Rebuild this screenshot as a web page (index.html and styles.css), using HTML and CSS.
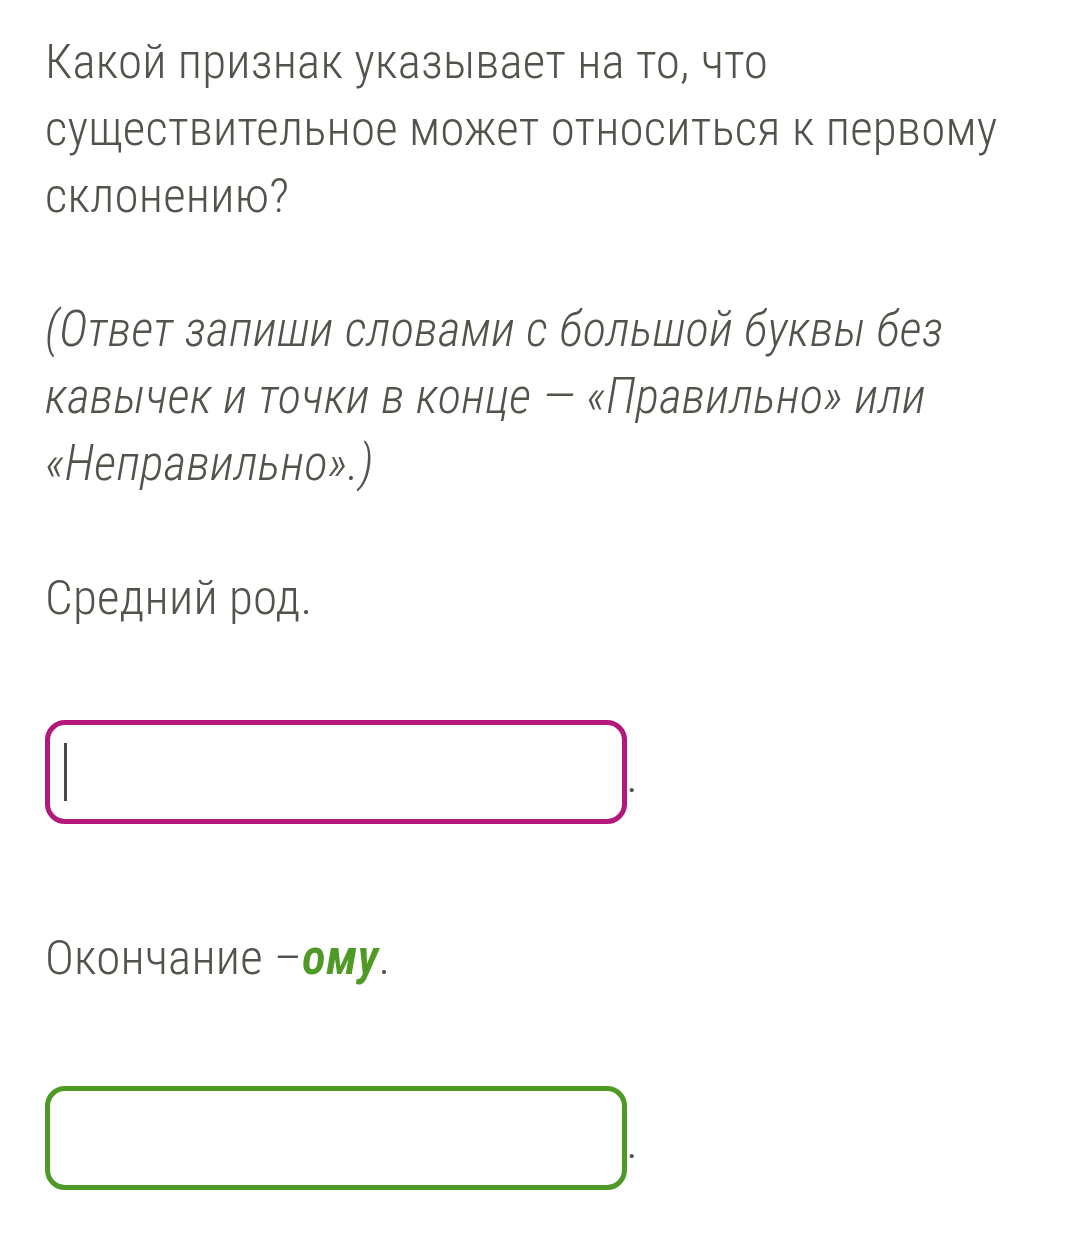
FILE: index.html
```html
<!DOCTYPE html>
<html lang="ru">
<head>
<meta charset="utf-8">
<link rel="stylesheet" href="styles.css">
</head>
<body>
<main class="page">
  <p class="question">Какой признак указывает на то, что существительное может относиться к первому склонению?</p>
  <p class="hint">(Ответ запиши словами с большой буквы без кавычек и точки в конце — «Правильно» или «Неправильно».)</p>
  <p class="statement">Средний род.</p>
  <div class="answer-row answer-row--first">
    <div class="answer-box answer-box--active"><span class="caret"></span></div><span class="dot">.</span>
  </div>
  <p class="statement statement--second">Окончание –<em class="ending">ому</em>.</p>
  <div class="answer-row answer-row--second">
    <div class="answer-box answer-box--correct"></div><span class="dot">.</span>
  </div>
</main>
</body>
</html>
```

FILE: styles.css
```css
html, body {
  margin: 0;
  padding: 0;
  background: #ffffff;
}
.page {
  padding: 28px 0 0 45px;
  font-family: "Roboto Condensed", "Roboto", "Liberation Sans", sans-serif;
  font-weight: 300;
  font-stretch: 80%;
  font-size: 49px;
  line-height: 67px;
  letter-spacing: 0.2px;
  color: #53534c;
  width: 1000px;
}
p { margin: 0; }
.hint { margin-top: 67px; font-style: italic; letter-spacing: 0.33px; }
.statement { margin-top: 67px; }
.answer-row {
  display: flex;
  align-items: flex-end;
}
.answer-row--first { margin-top: 89px; }
.answer-row--second { margin-top: 95px; }
.answer-box {
  box-sizing: border-box;
  width: 582px;
  height: 104px;
  border: 5px solid #b2197a;
  border-radius: 20px;
  position: relative;
}
.answer-box--correct { border-color: #4e9a25; }
.caret {
  position: absolute;
  left: 14px;
  top: 18px;
  width: 3px;
  height: 58px;
  background: #4a4a44;
}
.dot {
  font-size: 26px;
  line-height: 26px;
  font-weight: 700;
  margin-left: 1px;
  margin-bottom: 28px;
}
.statement--second { margin-top: 100px; }
.ending { color: #4e9a25; font-weight: 600; }
```
